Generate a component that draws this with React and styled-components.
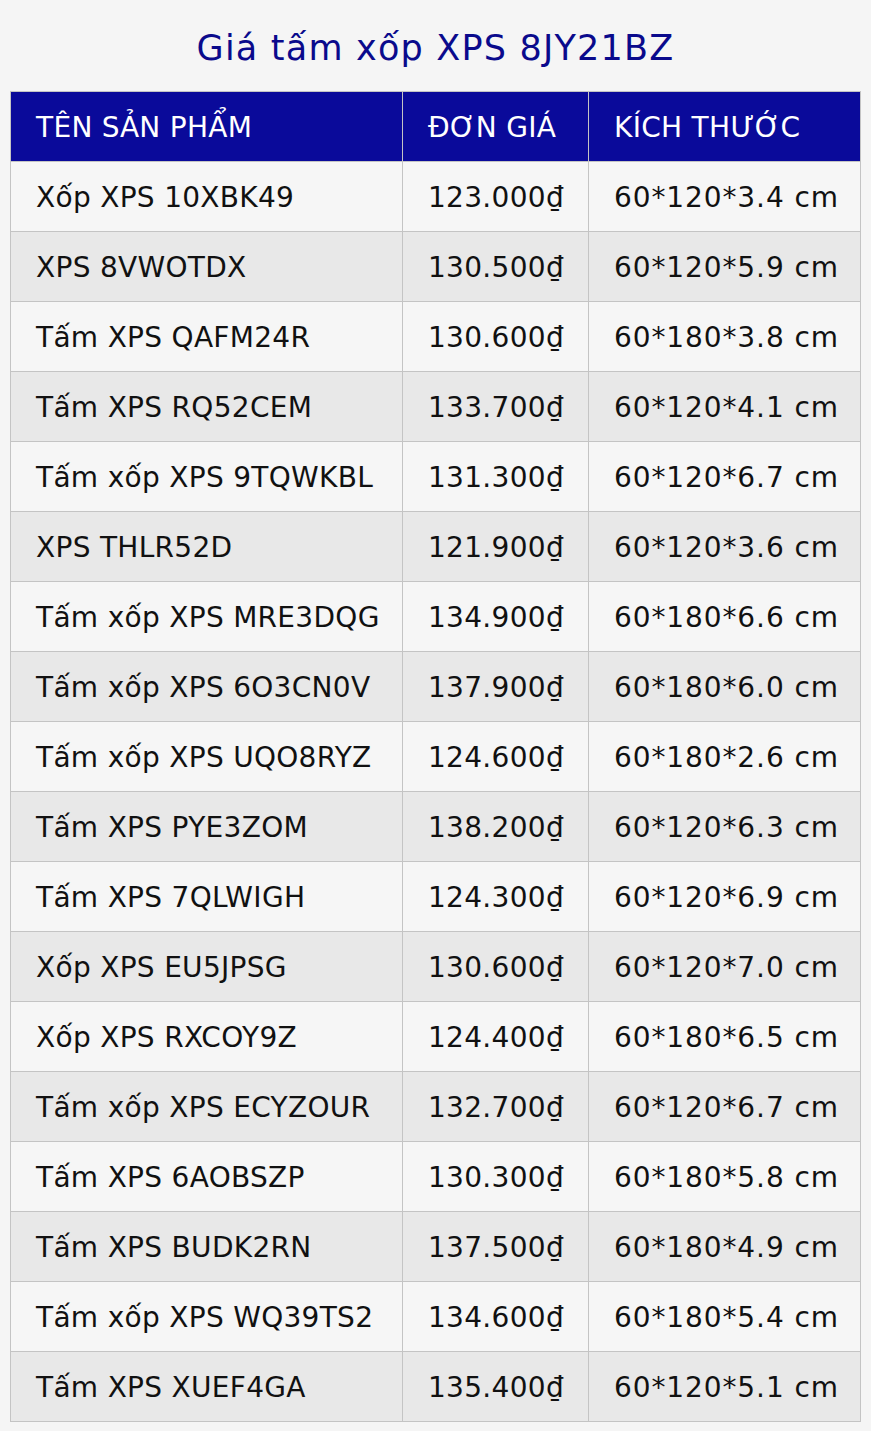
import React from 'react';
import styled, { createGlobalStyle } from 'styled-components';

const GlobalStyle = createGlobalStyle`
  body {
    margin: 0;
    background: #f5f5f5;
    font-family: Verdana, 'DejaVu Sans', sans-serif;
  }
`;

const Page = styled.div`
  padding: 0 10px 10px;
`;

const Title = styled.h2`
  margin: 0;
  padding: 27px 0 22px;
  text-align: center;
  font-size: 35px;
  letter-spacing: 1.2px;
  font-weight: normal;
  line-height: 42px;
  color: #0a0a8c;
`;

const Table = styled.table`
  width: 100%;
  border-collapse: collapse;
  table-layout: fixed;
  font-size: 28px;
  letter-spacing: 0.3px;
`;

const HeadCell = styled.th`
  background: #0a0a9a;
  color: #fff;
  font-weight: normal;
  text-align: left;
  height: 70px;
  padding: 1px 25px 0;
  border: 1px solid #c4c4c4;
  box-sizing: border-box;
`;

const Row = styled.tr`
  background: ${p => (p.$alt ? '#e8e8e8' : '#f6f6f6')};
`;

const Cell = styled.td`
  height: 70px;
  padding: 2px 25px 0;
  color: #111;
  text-align: ${p => (p.$right ? 'right' : 'left')};
  letter-spacing: ${p => (p.$wide ? '0.9px' : '0.3px')};
  border: 1px solid #c4c4c4;
  box-sizing: border-box;
  white-space: nowrap;
`;

const rows = [
  ['Xốp XPS 10XBK49', '123.000', '60*120*3.4 cm'],
  ['XPS 8VWOTDX', '130.500', '60*120*5.9 cm'],
  ['Tấm XPS QAFM24R', '130.600', '60*180*3.8 cm'],
  ['Tấm XPS RQ52CEM', '133.700', '60*120*4.1 cm'],
  ['Tấm xốp XPS 9TQWKBL', '131.300', '60*120*6.7 cm'],
  ['XPS THLR52D', '121.900', '60*120*3.6 cm'],
  ['Tấm xốp XPS MRE3DQG', '134.900', '60*180*6.6 cm'],
  ['Tấm xốp XPS 6O3CN0V', '137.900', '60*180*6.0 cm'],
  ['Tấm xốp XPS UQO8RYZ', '124.600', '60*180*2.6 cm'],
  ['Tấm XPS PYE3ZOM', '138.200', '60*120*6.3 cm'],
  ['Tấm XPS 7QLWIGH', '124.300', '60*120*6.9 cm'],
  ['Xốp XPS EU5JPSG', '130.600', '60*120*7.0 cm'],
  ['Xốp XPS RXCOY9Z', '124.400', '60*180*6.5 cm'],
  ['Tấm xốp XPS ECYZOUR', '132.700', '60*120*6.7 cm'],
  ['Tấm XPS 6AOBSZP', '130.300', '60*180*5.8 cm'],
  ['Tấm XPS BUDK2RN', '137.500', '60*180*4.9 cm'],
  ['Tấm xốp XPS WQ39TS2', '134.600', '60*180*5.4 cm'],
  ['Tấm XPS XUEF4GA', '135.400', '60*120*5.1 cm'],
];

const App = () => (
  <Page>
    <GlobalStyle />
    <Title>Giá tấm xốp XPS 8JY21BZ</Title>
    <Table>
      <colgroup>
        <col style={{ width: 392 }} />
        <col style={{ width: 186 }} />
        <col />
      </colgroup>
      <thead>
        <tr>
          <HeadCell>TÊN SẢN PHẨM</HeadCell>
          <HeadCell>ĐƠN GIÁ</HeadCell>
          <HeadCell>KÍCH THƯỚC</HeadCell>
        </tr>
      </thead>
      <tbody>
        {rows.map((r, i) => (
          <Row key={r[0]} $alt={i % 2 === 1}>
            <Cell>{r[0]}</Cell>
            <Cell $right>{r[1]}₫</Cell>
            <Cell $wide>{r[2]}</Cell>
          </Row>
        ))}
      </tbody>
    </Table>
  </Page>
);

export default App;
